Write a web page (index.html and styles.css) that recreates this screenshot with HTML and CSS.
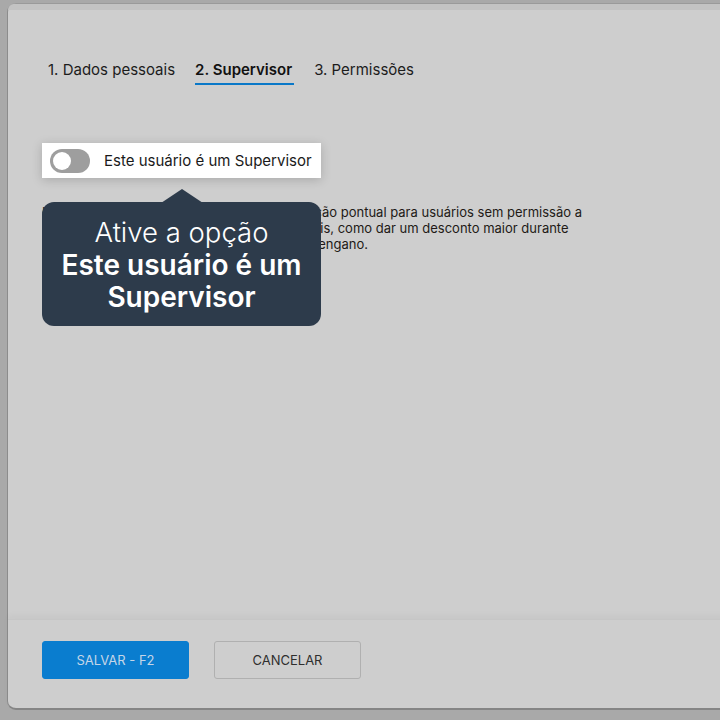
FILE: index.html
```html
<!DOCTYPE html>
<html>
<head>
<meta charset="UTF-8">
<title>Usuário - Supervisor</title>
<link rel="stylesheet" href="styles.css">
</head>
<body>
	<div class="modal">
		<div class="modal-top"></div>
		<nav class="tabs">
			<div class="tab">1. Dados pessoais</div>
			<div class="tab active">2. Supervisor</div>
			<div class="tab">3. Permissões</div>
		</nav>
		<section class="content">
			<div class="highlight">
				<div class="switch"><span class="knob"></span></div>
				<span class="switch-label">Este usuário é um Supervisor</span>
			</div>
			<p class="desc">
				Um Supervisor poderá autorizar uma aprovação pontual para usuários sem permissão a<br>
				executar as opções normalmente indisponíveis, como dar um desconto maior durante<br>
				uma venda ou cancelar um item lançado por engano.
			</p>
			<div class="tip">
				<span class="tip-light">Ative a opção</span><br>
				<b>Este usuário é um Supervisor</b>
			</div>
		</section>
		<footer class="actions">
			<button class="btn primary">SALVAR - F2</button>
			<button class="btn">CANCELAR</button>
		</footer>
	</div>
</body>
</html>
```

FILE: styles.css
```css
*{
	margin:0;
	padding:0;
	box-sizing:border-box;
}
body{
	background:#a9a9a9;
	font-family:Inter,"Noto Sans",sans-serif;
	overflow:hidden;
	height:720px;
}
.modal{
	margin:3px 0 0 7px;
	width:740px;
	height:707px;
	background:#cecece;
	border-radius:9px 0 0 9px;
	border-left:1px solid #8c8c8c;
	border-bottom:2px solid #858585;
	border-top:1px solid #9a9a9a;
	display:flex;
	flex-direction:column;
}
.modal-top{
	height:6px;
	background:#c3c3c3;
	border-radius:8px 0 0 0;
}
.tabs{
	display:flex;
	gap:20px;
	padding:50px 0 0 40px;
	font-size:15px;
	color:#1c1c1c;
}
.tab{
	padding-bottom:4px;
	border-bottom:2px solid transparent;
}
.tab.active{
	font-weight:600;
	color:#111;
	border-bottom-color:#0a78c8;
	padding-right:2px;
}
.content{
	position:relative;
	flex:1;
	padding:58px 0 0 34px;
}
.highlight{
	display:flex;
	align-items:center;
	width:279px;
	height:35px;
	background:#fff;
	padding-left:8px;
	box-shadow:0 2px 10px rgba(0,0,0,0.18);
	position:relative;
	z-index:2;
}
.switch{
	width:40px;
	height:24px;
	border-radius:12px;
	background:#9e9e9e;
	padding:3px;
}
.knob{
	display:block;
	width:18px;
	height:18px;
	border-radius:50%;
	background:#fff;
}
.switch-label{
	margin-left:14px;
	font-size:15px;
	color:#1a1a1a;
}
.desc{
	margin-top:26px;
	font-size:13px;
	line-height:16px;
	color:#221a16;
}
.tip{
	position:absolute;
	left:34px;
	top:117px;
	width:279px;
	height:124px;
	background:#2d3b4b;
	border-radius:12px;
	color:#fff;
	text-align:center;
	font-size:28px;
	line-height:32.5px;
	padding:14px 10px 0;
	z-index:3;
}
.tip::before{
	content:"";
	position:absolute;
	left:119px;
	top:-13px;
	border-left:21px solid transparent;
	border-right:21px solid transparent;
	border-bottom:14px solid #2d3b4b;
}
.tip-light{
	font-weight:300;
	font-size:27.5px;
}
.tip b{
	font-weight:600;
}
.actions{
	height:89px;
	border-top:1px solid #c6c6c6;
	box-shadow:0 -4px 6px rgba(0,0,0,0.03);
	display:flex;
	gap:25px;
	padding:21px 0 0 34px;
}
.btn{
	width:147px;
	height:38px;
	border-radius:3px;
	font-family:Inter,"Noto Sans",sans-serif;
	font-size:13px;
	background:transparent;
	border:1px solid #b0b0b0;
	color:#2e2e2e;
}
.btn.primary{
	background:#0a7dcf;
	border-color:#0a7dcf;
	color:#c5d6e8;
}
```
